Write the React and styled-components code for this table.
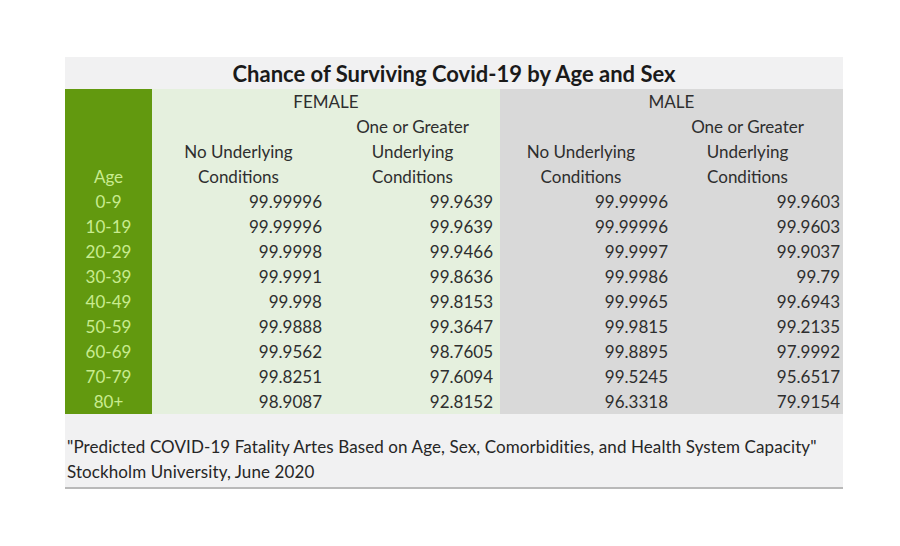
import React from "react";
import styled, { createGlobalStyle } from "styled-components";

const GlobalStyle = createGlobalStyle`
  html, body {
    margin: 0;
    padding: 0;
    background: #ffffff;
  }
  body {
    font-family: Lato, "Open Sans", sans-serif;
    color: #2e2e2e;
  }
`;

const Page = styled.div`
  width: 900px;
  height: 546px;
  box-sizing: border-box;
  padding: 57px 0 0 65px;
`;

const Card = styled.div`
  width: 778px;
  background: #f1f1f2;
  box-shadow: 0 2px 0 #b9b9b9;
`;

const Title = styled.div`
  height: 32px;
  display: flex;
  align-items: center;
  justify-content: center;
  font-size: 22px;
  font-weight: 700;
  color: #1a1a1a;
`;

const Table = styled.div`
  display: grid;
  grid-template-columns: 87px 173px 175px 172px 171px;
  grid-auto-rows: 25px;
  font-size: 17px;
`;

const fills = {
  age: "#62990f",
  female: "#e5f0de",
  male: "#d9d9d9",
};

const Cell = styled.div`
  background: ${(p) => fills[p.$group]};
  color: ${(p) => (p.$group === "age" ? "#c9ec90" : "#2e2e2e")};
  grid-column: ${(p) => p.$col || "auto"};
  grid-row: ${(p) => p.$row || "auto"};
  display: flex;
  flex-direction: column;
  justify-content: flex-end;
  align-items: ${(p) => p.$align || "center"};
  padding-right: ${(p) => p.$pad || 0}px;
  line-height: 25px;
  text-align: center;
  white-space: nowrap;
`;

const Footer = styled.div`
  padding: 20px 0 3px 2px;
  font-size: 17px;
  letter-spacing: 0.1px;
  line-height: 25px;
  color: #262626;
  white-space: nowrap;
`;

const rows = [
  ["0-9", "99.99996", "99.9639", "99.99996", "99.9603"],
  ["10-19", "99.99996", "99.9639", "99.99996", "99.9603"],
  ["20-29", "99.9998", "99.9466", "99.9997", "99.9037"],
  ["30-39", "99.9991", "99.8636", "99.9986", "99.79"],
  ["40-49", "99.998", "99.8153", "99.9965", "99.6943"],
  ["50-59", "99.9888", "99.3647", "99.9815", "99.2135"],
  ["60-69", "99.9562", "98.7605", "99.8895", "97.9992"],
  ["70-79", "99.8251", "97.6094", "99.5245", "95.6517"],
  ["80+", "98.9087", "92.8152", "96.3318", "79.9154"],
];

const groups = ["age", "female", "female", "male", "male"];
const pads = [0, 3, 7, 4, 3];

export default function App() {
  return (
    <Page>
      <GlobalStyle />
      <Card>
        <Title>Chance of Surviving Covid-19 by Age and Sex</Title>
        <Table>
          <Cell $group="age" $col="1" $row="1 / span 4">
            Age
          </Cell>
          <Cell $group="female" $col="2 / span 2" $row="1">
            FEMALE
          </Cell>
          <Cell $group="male" $col="4 / span 2" $row="1">
            MALE
          </Cell>
          <Cell $group="female" $col="2" $row="2 / span 3">
            <span>No Underlying</span>
            <span>Conditions</span>
          </Cell>
          <Cell $group="female" $col="3" $row="2 / span 3">
            <span>One or Greater</span>
            <span>Underlying</span>
            <span>Conditions</span>
          </Cell>
          <Cell $group="male" $col="4" $row="2 / span 3" $pad={10}>
            <span>No Underlying</span>
            <span>Conditions</span>
          </Cell>
          <Cell $group="male" $col="5" $row="2 / span 3" $pad={20}>
            <span>One or Greater</span>
            <span>Underlying</span>
            <span>Conditions</span>
          </Cell>
          {rows.map((row) =>
            row.map((value, i) => (
              <Cell
                key={row[0] + i}
                $group={groups[i]}
                $align={i === 0 ? "center" : "flex-end"}
                $pad={pads[i]}
              >
                {value}
              </Cell>
            ))
          )}
        </Table>
        <Footer>
          <div>
            "Predicted COVID-19 Fatality Artes Based on Age, Sex, Comorbidities,
            and Health System Capacity"
          </div>
          <div>Stockholm University, June 2020</div>
        </Footer>
      </Card>
    </Page>
  );
}
